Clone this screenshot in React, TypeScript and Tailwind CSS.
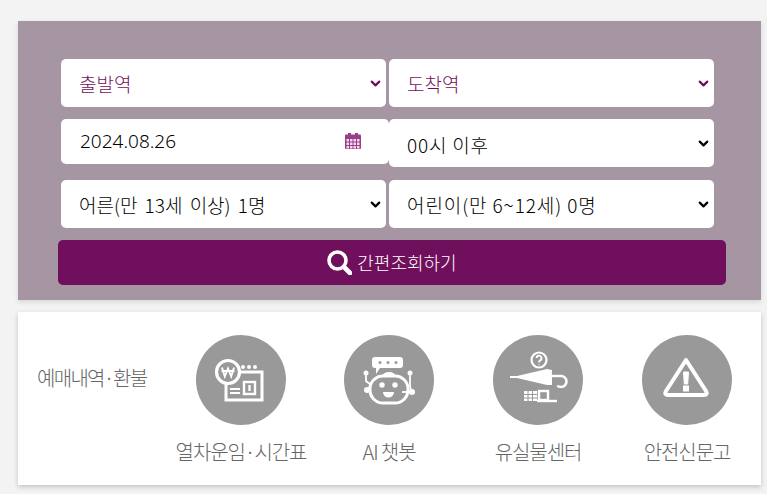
import { ChevronDown } from "lucide-react"

const FONT = "font-['Noto_Sans_CJK_KR','Noto_Sans',sans-serif]"

function Field({
  label,
  color = "text-black",
  arrow = "text-black",
  textClass = "",
  className = "",
}: {
  label: string
  color?: string
  arrow?: string
  textClass?: string
  className?: string
}) {
  return (
    <div className={`h-12 bg-white rounded-[5px] flex items-center justify-between pl-[18px] pr-[3px] ${className}`}>
      <span className={`text-[19px] leading-none font-light ${color} ${textClass}`}>{label}</span>
      <ChevronDown size={15} strokeWidth={3.5} className={arrow} />
    </div>
  )
}

function CalendarIcon() {
  return (
    <svg width="16" height="16" viewBox="0 0 16 16" className="mb-[1px]">
      <rect x="0" y="1.500" width="16" height="14.500" rx="1" fill="#9b3d88" />
      <rect x="3" y="0" width="3" height="4" fill="#9b3d88" />
      <rect x="10" y="0" width="3" height="4" fill="#9b3d88" />
      {[6, 9.5, 13].flatMap((y) =>
        [1.5, 5, 8.5, 12].map((x) => <rect key={`${x}-${y}`} x={x} y={y} width="2.5" height="2.5" fill="#f2dcee" />),
      )}
    </svg>
  )
}

function SearchIcon() {
  return (
    <svg width="25" height="25" viewBox="0 0 25 25" fill="none" stroke="#fff">
      <circle cx="10.5" cy="10.5" r="8.5" strokeWidth="3.6" />
      <path d="M17 17l6 6" strokeWidth="4.6" strokeLinecap="round" />
    </svg>
  )
}

function FareIcon() {
  return (
    <svg viewBox="0 0 90 90" className="size-[90px]" fill="none" stroke="#fff" strokeWidth="2.2">
      <circle cx="47" cy="32" r="2" fill="#fff" stroke="none" />
      <circle cx="53" cy="32" r="2" fill="#fff" stroke="none" />
      <circle cx="59" cy="32" r="2" fill="#fff" stroke="none" />
      <path d="M44 37h22v28H30V48" strokeWidth="3" />
      <circle cx="32" cy="37" r="11.500" strokeWidth="3.200" />
      <path d="M26 32.500l2.800 9 3.200-8 3.200 8 2.800-9M25.500 36h13" strokeWidth="1.900" />
      <path d="M34 54h10M34 58h10" strokeWidth="2.200" />
      <rect x="48" y="47" width="11" height="12" strokeWidth="2.400" />
      <path d="M53.500 50v6" strokeWidth="2.400" />
    </svg>
  )
}

function BotIcon() {
  return (
    <svg viewBox="0 0 90 90" className="size-[90px]" fill="none" stroke="#fff" strokeWidth="2.2">
      <path d="M31 22h25a3 3 0 0 1 3 3v5a3 3 0 0 1-3 3H36l-4 6v-6h-1a3 3 0 0 1-3-3v-5a3 3 0 0 1 3-3z" fill="#fff" stroke="none" />
      <circle cx="36" cy="27.500" r="1.500" fill="#999" stroke="none" />
      <circle cx="44" cy="27.500" r="1.500" fill="#999" stroke="none" />
      <circle cx="52" cy="27.500" r="1.500" fill="#999" stroke="none" />
      <path d="M38 42a7 5 0 0 1 14 0" fill="#fff" stroke="none" />
      <rect x="26" y="41" width="38" height="27" rx="13" strokeWidth="3" />
      <circle cx="38" cy="50" r="2.700" fill="#fff" stroke="none" />
      <circle cx="51" cy="50" r="2.700" fill="#fff" stroke="none" />
      <path d="M39 57h11a5.500 5.500 0 0 1-11 0z" fill="#fff" stroke="none" />
      <path d="M23 55l4-5-5-4v-8M67 57l-1-7 0-4V38" strokeWidth="1.800" />
      <path d="M58 57h10" strokeWidth="1.800" />
      <circle cx="22" cy="38" r="2.500" fill="#fff" stroke="none" />
      <circle cx="66" cy="38" r="2.500" fill="#fff" stroke="none" />
      <circle cx="23" cy="55" r="3" fill="#fff" stroke="none" />
      <circle cx="68" cy="57" r="3" fill="#fff" stroke="none" />
    </svg>
  )
}

function UmbrellaIcon() {
  return (
    <svg viewBox="0 0 90 90" className="size-[90px]" fill="none" stroke="#fff" strokeWidth="2">
      <circle cx="46" cy="25" r="7.500" strokeWidth="2.200" />
      <path d="M43.500 23a2.500 2.500 0 1 1 3.500 2.500c-1 .5-1 1-1 2M46 29v.5" strokeWidth="1.800" />
      <path d="M17 41l7 0 30-7 5 1 0 15-5 0-30-7-7 0z" fill="#fff" stroke="none" />
      <path d="M59 41h9a5.500 5.500 0 1 1 0 11c-2 0-3-.5-3.500-1.500" strokeWidth="2.600" />
      <rect x="31" y="56" width="13" height="10" fill="#fff" stroke="none" />
      <path d="M35 56v10M39.500 56v10M31 59.500h13M31 63h13" stroke="#999" strokeWidth="1" />
      <rect x="46" y="56" width="9" height="9" strokeWidth="2.400" />
      <path d="M44 66h20" strokeWidth="2.400" />
    </svg>
  )
}

function WarnIcon() {
  return (
    <svg viewBox="0 0 90 90" className="size-[90px]" fill="none" stroke="#fff">
      <path d="M44 25L24 56Q22 60 26 60H62Q66 60 64 56Z" strokeWidth="4" strokeLinejoin="round" />
      <path d="M41.500 37h5l-.8 12h-3.400z" fill="#fff" />
      <rect x="41.500" y="51" width="5" height="5" fill="#fff" />
    </svg>
  )
}

export default function App() {
  return (
    <div className={`w-[767px] h-[494px] overflow-hidden bg-[#f3f3f3] pt-[21px] pl-[18px] ${FONT}`}>
      <div className="w-[743px] h-[279px] bg-[#a695a3] shadow-[0_2px_5px_rgba(0,0,0,0.12)] pt-[38px] pl-[40px]">
        <div className="flex gap-[3px] pl-[3px]">
          <Field label="출발역" color="text-[#70105c]" arrow="text-[#70105c]" className="w-[325px]" />
          <Field label="도착역" color="text-[#70105c]" arrow="text-[#70105c]" className="w-[325px]" />
        </div>
        <div className="flex mt-3 pl-[3px]">
          <div className="w-[328px] h-[45px] bg-white rounded-[5px] flex items-center justify-between pl-[19px] pr-[28px]">
            <span className="text-[19px] leading-none font-light font-['Noto_Sans'] text-black">2024.08.26</span>
            <CalendarIcon />
          </div>
          <Field label="00시 이후" textClass="pt-[3px] tracking-[0.8px]" className="w-[325px]" />
        </div>
        <div className="flex gap-[3px] mt-[13px] pl-[3px]">
          <Field label="어른(만 13세 이상) 1명" textClass="[word-spacing:3px]" className="w-[325px]" />
          <Field label="어린이(만 6~12세) 0명" textClass="tracking-[0.9px]" className="w-[325px]" />
        </div>
        <button className="w-[668px] h-[45px] mt-3 bg-[#70105c] rounded-[5px] flex items-center justify-center gap-[5px] text-white text-[18px] font-light">
          <SearchIcon />
          간편조회하기
        </button>
      </div>
      <div className="w-[743px] h-[173px] mt-3 bg-white shadow-[0_2px_5px_rgba(0,0,0,0.2)] flex pt-[23px]">
        <div className="w-[142px] shrink-0 pl-[19px] pt-[33px] text-[20px] font-light leading-none text-[#666] tracking-[-1.7px] whitespace-nowrap">
          예매내역·환불
        </div>
        <div className="flex-1 grid grid-cols-[148px_149px_149px_149px] pl-[16px]">
          {[
            { icon: <FareIcon />, label: "열차운임·시간표" },
            { icon: <BotIcon />, label: "AI 챗봇" },
            { icon: <UmbrellaIcon />, label: "유실물센터" },
            { icon: <WarnIcon />, label: "안전신문고" },
          ].map((item) => (
            <div key={item.label} className="flex flex-col items-center w-[130px]">
              <div className="size-[90px] rounded-full bg-[#999999]">{item.icon}</div>
              <span className="mt-[17px] text-[20px] font-light leading-none text-[#666] tracking-[-1.1px] whitespace-nowrap">
                {item.label}
              </span>
            </div>
          ))}
        </div>
      </div>
    </div>
  )
}
